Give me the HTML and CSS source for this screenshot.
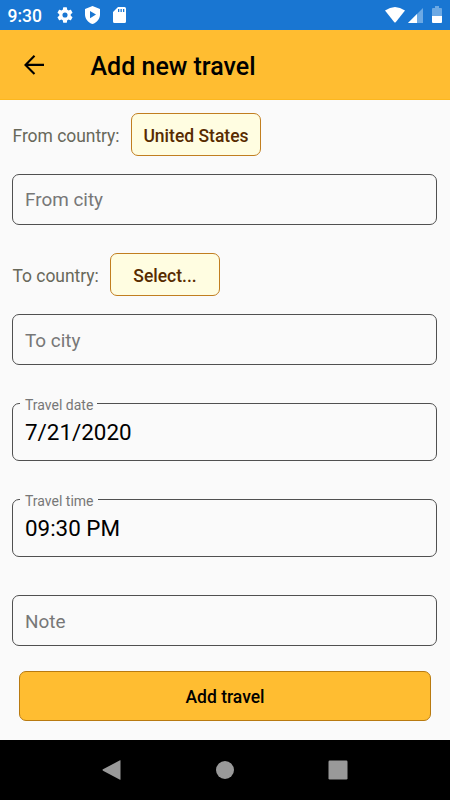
FILE: index.html
```html
<!DOCTYPE html>
<html lang="en">
<head>
<meta charset="utf-8">
<title>Add new travel</title>
<link rel="stylesheet" href="styles.css">
</head>
<body>
<div class="status">
  <span class="clock">9:30</span>
  <svg class="gear" viewBox="2 2 20 20"><path d="M19.14 12.94c.04-.3.06-.61.06-.94 0-.32-.02-.64-.07-.94l2.03-1.58a.49.49 0 0 0 .12-.61l-1.92-3.32a.49.49 0 0 0-.59-.22l-2.39.96a7 7 0 0 0-1.62-.94l-.36-2.54a.48.48 0 0 0-.48-.41h-3.84a.47.47 0 0 0-.47.41l-.36 2.54c-.59.24-1.13.57-1.62.94l-2.39-.96a.48.48 0 0 0-.59.22L2.74 8.87a.47.47 0 0 0 .12.61l2.03 1.58c-.05.3-.09.63-.09.94s.02.64.07.94l-2.03 1.58a.49.49 0 0 0-.12.61l1.92 3.32c.12.22.37.29.59.22l2.39-.96c.5.38 1.03.7 1.62.94l.36 2.54c.05.24.24.41.48.41h3.84c.24 0 .44-.17.47-.41l.36-2.54a7 7 0 0 0 1.62-.94l2.39.96c.22.08.47 0 .59-.22l1.92-3.32a.47.47 0 0 0-.12-.61zM12 15.2a3.2 3.2 0 1 1 0-6.400 3.200 3.200 0 0 1 0 6.400z"/></svg>
  <svg class="shield" viewBox="0 0 15 18"><path fill-rule="evenodd" d="M7.500 0 15 3v5.500c0 4.300-3 8.200-7.500 9.500C3 16.700 0 12.800 0 8.500V3zM5 5v7.200l6-3.600z"/></svg>
  <svg class="card" viewBox="0 0 13 16"><path fill-rule="evenodd" d="M5 0h6.500Q13 0 13 1.500v13q0 1.500-1.500 1.500h-10Q0 16 0 14.500V5zM5 2v3h1.300V2zM7.500 2v3h1.300V2zM10 2v3h1.300V2z"/></svg>
  <div class="signals">
    <svg class="wifi" viewBox="0 0 20 16"><path d="M0 3.500Q10-3.500 20 3.500L10.700 15.200Q10 16 9.300 15.200z"/></svg>
    <svg class="cell" viewBox="0 0 15 15"><path class="dim" d="M15 0v15H0z"/><path d="M9 6v9H0z"/></svg>
    <svg class="battery" viewBox="0 0 10 17"><path class="dim" d="M0 10V3q0-1 1-1h2V0h4v2h2q1 0 1 1v7z"/><path d="M0 10h10v6q0 1-1 1H1q-1 0-1-1z"/></svg>
  </div>
</div>
<header class="appbar">
  <svg class="back" viewBox="0 0 20 20"><path d="M10.500 .8 1.500 9.900l9 9.100M1.500 9.900H20"/></svg>
  <h1>Add new travel</h1>
</header>
<main>
  <div class="country"><span>From country:</span><button class="pick pick-from">United States</button></div>
  <div class="field">From city</div>
  <div class="country second"><span>To country:</span><button class="pick pick-to">Select...</button></div>
  <div class="field to-city">To city</div>
  <fieldset class="filled"><legend>Travel date</legend><div class="value">7/21/2020</div></fieldset>
  <fieldset class="filled"><legend>Travel time</legend><div class="value">09:30 PM</div></fieldset>
  <div class="field note">Note</div>
  <button class="submit">Add travel</button>
</main>
<nav>
  <svg viewBox="0 0 20 20"><path d="M18.500 .3v19.400Q18.500 20 18 19.700L1 10.700Q0 10 1 9.300L18 .3z"/></svg>
  <svg viewBox="0 0 20 20"><circle cx="10" cy="10" r="9"/></svg>
  <svg viewBox="0 0 20 20"><rect x=".5" y=".5" width="19" height="19" rx="1.200"/></svg>
</nav>
</body>
</html>
```
FILE: styles.css
```css
* { box-sizing: border-box; }
body { margin: 0; width: 450px; height: 800px; display: flex; flex-direction: column; overflow: hidden; background: #fafafa; font-family: Roboto, sans-serif; color: #000; }
svg { display: block; flex: none; }
button { font-family: inherit; padding: 0; }
.status { height: 30px; flex: none; display: flex; align-items: center; background: #1976d2; color: #fff; padding-left: 7.500px; }
.status svg { fill: #fff; }
.clock { width: 49.500px; font-size: 17.5px; font-weight: 500; line-height: 30px; padding-top: 1px; }
.gear { width: 16px; height: 16px; }
.shield { width: 15px; height: 18px; margin-left: 12px; }
.card { width: 13px; height: 16px; margin-left: 13px; }
.signals { display: flex; margin-left: auto; padding-right: 8px; }
.wifi { width: 20px; height: 16px; }
.cell { width: 15px; height: 15px; margin: 1px 0 0 3px; }
.battery { width: 10px; height: 17px; margin: -1px 0 0 9px; }
.status .dim { fill: #6ca9e4; }
.appbar { height: 70px; flex: none; display: flex; align-items: center; background: #ffbd31; border-bottom: 1px solid #fcb71e; padding-left: 24px; }
.back { width: 20px; height: 20px; fill: none; stroke: #000; stroke-width: 2.1; }
h1 { margin: 4px 0 0 46.500px; font-size: 25px; font-weight: 500; line-height: 32px; white-space: nowrap; }
main { height: 640px; flex: none; padding: 13px 13px 0 12px; }
.country { display: flex; align-items: center; height: 43px; font-size: 17.5px; color: #68685a; white-space: nowrap; }
.country span { padding: 2px 0 0 .5px; width: 107px; flex: none; letter-spacing: -.05px; }
.second span { width: 87px; }
.pick { height: 43px; border: 1px solid #c17e20; border-radius: 7px; background: #fffde1; color: #572b00; font-size: 17.5px; font-weight: 500; padding-top: 2px; }
.pick-from { width: 130px; margin-left: 12px; }
.pick-to { width: 110px; margin-left: 11px; }
.second { margin-top: 28px; }
.field { height: 51px; margin-top: 18px; border: 1px solid #505050; border-radius: 7px; padding-left: 12px; font-size: 18.9px; line-height: 50px; color: #777; }
.to-city { line-height: 51px; }
.filled { height: 65.500px; margin: 30px 0 0; min-width: 0; padding: 0 0 0 7px; border: 1px solid #505050; border-radius: 7px; }
.filled + .filled { margin-top: 30.500px; }
legend { height: 16px; padding: 0 4px 0 5px; font-size: 14px; line-height: 16px; color: #777; position: relative; top: 2px; }
.value { padding-left: 5px; margin-top: 7px; font-size: 22.4px; line-height: 28px; }
.note { margin-top: 38px; line-height: 51px; }
.submit { display: block; width: 412px; height: 50px; margin: 25px 0 0 7px; border: 1px solid #b87a10; border-radius: 7px; background: #ffbd31; color: #000; font-size: 17.5px; font-weight: 500; padding-top: 2px; }
nav { height: 60px; flex: none; display: flex; align-items: center; gap: 93px; padding-left: 101.500px; background: #000; }
nav svg { width: 20px; height: 20px; fill: #999; }
```
